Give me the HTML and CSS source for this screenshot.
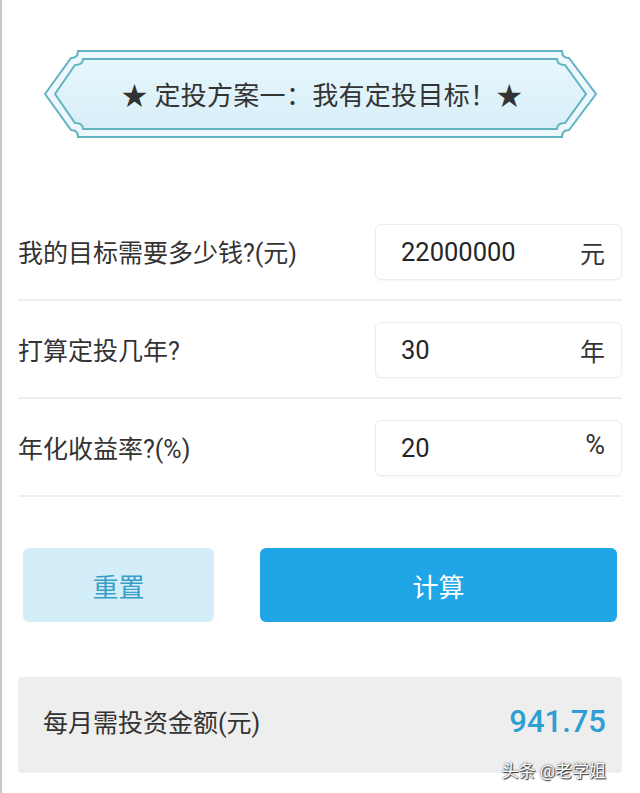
FILE: index.html
```html
<!DOCTYPE html>
<html lang="zh-CN">
<head>
    <meta charset="UTF-8">
    <meta name="viewport" content="width=device-width, initial-scale=1.0">
    <title>定投计算器</title>
    <link rel="stylesheet" href="styles.css">
</head>
<body>

<div class="page">

    <!-- 标题横幅 -->
    <div class="banner">
        <svg class="banner-bg" viewBox="0 0 554 88" width="554" height="88">
            <defs>
                <linearGradient id="bannerFill" x1="0" y1="0" x2="0" y2="1">
                    <stop offset="0" stop-color="#e6f6fc"/>
                    <stop offset="1" stop-color="#d8eff9"/>
                </linearGradient>
            </defs>
            <path d="M34 1 Q34 8 27 8 L1 44 L27 80 Q34 80 34 87 L518 87 Q518 80 525 80 L552 44 L525 8 Q518 8 518 1 Z"
                  fill="#eef8fc" stroke="#62b3c2" stroke-width="2"/>
            <path d="M39 9 Q39 15 31 15 L11 44 L31 73 Q39 73 39 79 L513 79 Q513 73 521 73 L542 44 L521 15 Q513 15 513 9 Z"
                  fill="url(#bannerFill)" stroke="#62b3c2" stroke-width="2"/>
        </svg>
        <span class="banner-title">★ 定投方案一：我有定投目标！★</span>
    </div>

    <!-- 输入项 -->
    <form class="plan-form">
        <div class="row">
            <label class="row-label">我的目标需要多少钱?(元)</label>
            <div class="field">
                <span class="field-value">22000000</span>
                <span class="field-unit">元</span>
            </div>
        </div>
        <div class="row">
            <label class="row-label">打算定投几年?</label>
            <div class="field">
                <span class="field-value">30</span>
                <span class="field-unit">年</span>
            </div>
        </div>
        <div class="row">
            <label class="row-label">年化收益率?(%)</label>
            <div class="field">
                <span class="field-value">20</span>
                <span class="field-unit unit-pct">%</span>
            </div>
        </div>
    </form>

    <!-- 按钮 -->
    <div class="actions">
        <button type="button" class="btn btn-reset">重置</button>
        <button type="button" class="btn btn-calc">计算</button>
    </div>

    <!-- 结果 -->
    <div class="result">
        <span class="result-label">每月需投资金额(元)</span>
        <span class="result-value">941.75</span>
        <span class="watermark">头条 @老学姐</span>
    </div>

</div>

</body>
</html>
```

FILE: styles.css
```css
body {
    margin: 0;
    font-family: Roboto, "Noto Sans CJK SC", sans-serif;
    color: #333;
    background: #fff;
}

.page {
    min-height: 793px;
    box-sizing: border-box;
    border-left: 2px solid #c8c8c8;
    padding: 50px 18px 0 16px;
}

/* 标题横幅 */
.banner {
    position: relative;
    width: 554px;
    height: 88px;
    margin-left: 26px;
    display: flex;
    align-items: center;
    justify-content: center;
}

.banner-bg {
    position: absolute;
    left: 0;
    top: 0;
}

.banner-title {
    position: relative;
    font-size: 26px;
    letter-spacing: 0.3px;
    color: #333;
    padding-left: 2px;
    margin-top: -2px;
}

/* 输入项 */
.plan-form {
    margin-top: 65px;
}

.row {
    display: flex;
    align-items: center;
    padding: 21px 0 19px;
    border-bottom: 2px solid #eeeeee;
}

.row-label {
    font-size: 25px;
    color: #333;
    margin-top: -3px;
}

.field {
    margin-left: auto;
    width: 247px;
    height: 56px;
    box-sizing: border-box;
    border: 1px solid #ececec;
    border-radius: 6px;
    box-shadow: 0 1px 2px rgba(0, 0, 0, 0.04);
    display: flex;
    align-items: center;
    padding: 0 16px 0 25px;
}

.field-value {
    font-size: 25.5px;
    color: #262626;
}

.field-unit {
    margin-left: auto;
    font-size: 25px;
    color: #333;
}

.unit-pct {
    font-size: 27px;
    margin-top: -6px;
}

/* 按钮 */
.actions {
    display: flex;
    gap: 46px;
    margin: 51px 5px 0;
}

.btn {
    height: 74px;
    border: none;
    border-radius: 6px;
    font-family: inherit;
    font-size: 26px;
    cursor: pointer;
}

.btn-reset {
    width: 191px;
    background-color: #d3edf9;
    color: #3a9fc6;
}

.btn-calc {
    flex: 1;
    background-color: #20a6e7;
    color: #fff;
}

/* 结果 */
.result {
    position: relative;
    margin-top: 55px;
    height: 96px;
    box-sizing: border-box;
    background-color: #eeeeee;
    border-radius: 4px;
    display: flex;
    align-items: center;
    padding: 0 16px 8px 25px;
}

.result-label {
    font-size: 25px;
    color: #333;
}

.result-value {
    margin-left: auto;
    font-size: 31px;
    font-weight: 500;
    color: #2e9fd2;
}

.watermark {
    position: absolute;
    right: 16px;
    bottom: -9px;
    font-size: 17px;
    color: #fff;
    text-shadow: 0 0 2px #333, 1px 1px 1px #333;
}
```
